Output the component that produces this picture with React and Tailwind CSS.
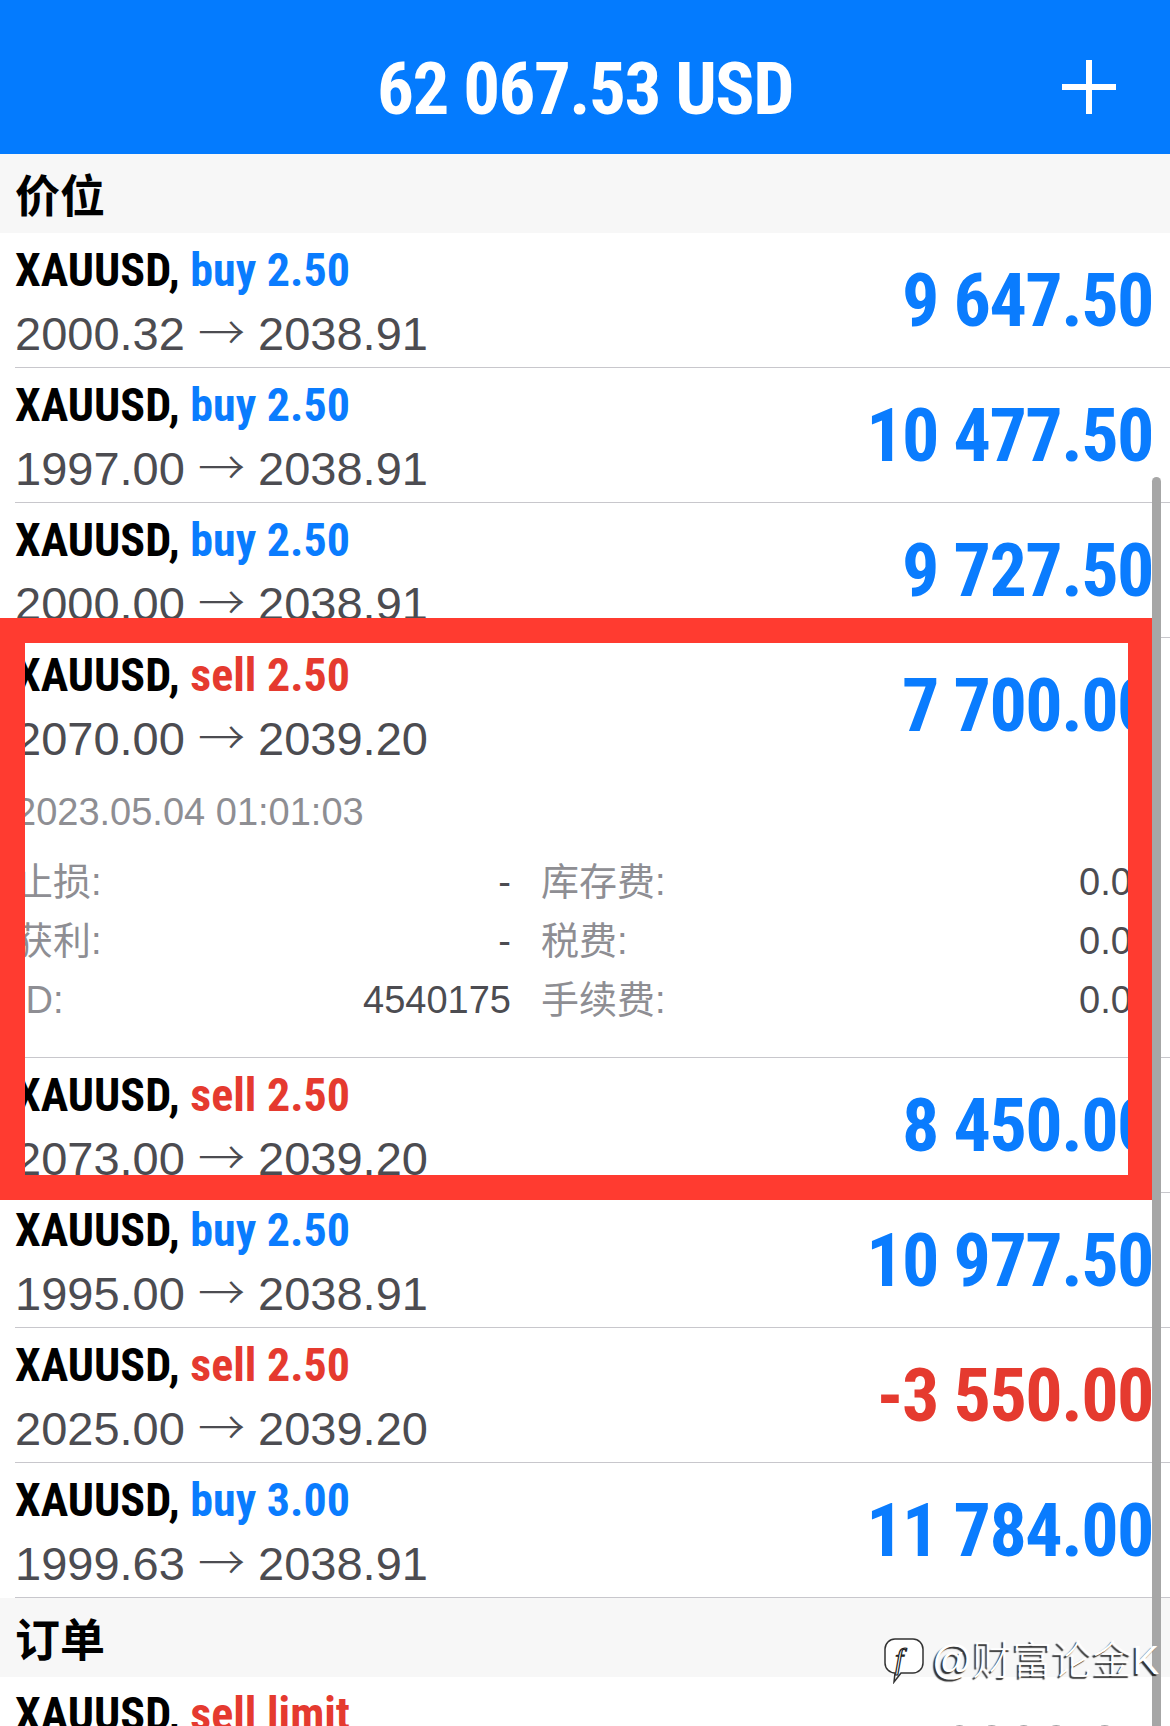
import React from "react";

const POSITIONS = [
  { side: "buy", lots: "2.50", open: "2000.32", price: "2038.91", profit: "9 647.50" },
  { side: "buy", lots: "2.50", open: "1997.00", price: "2038.91", profit: "10 477.50" },
  { side: "buy", lots: "2.50", open: "2000.00", price: "2038.91", profit: "9 727.50" },
  { side: "sell", lots: "2.50", open: "2070.00", price: "2039.20", profit: "7 700.00", open_details: true },
  { side: "sell", lots: "2.50", open: "2073.00", price: "2039.20", profit: "8 450.00" },
  { side: "buy", lots: "2.50", open: "1995.00", price: "2038.91", profit: "10 977.50" },
  { side: "sell", lots: "2.50", open: "2025.00", price: "2039.20", profit: "-3 550.00" },
  { side: "buy", lots: "3.00", open: "1999.63", price: "2038.91", profit: "11 784.00" },
];

const DETAILS = [
  ["止损:", "-", "库存费:", "0.00"],
  ["获利:", "-", "税费:", "0.00"],
  ["ID:", "4540175", "手续费:", "0.00"],
];

function PlusIcon() {
  return (
    <svg width="54" height="54" viewBox="0 0 54 54" fill="none">
      <path d="M27 0v54M0 27h54" stroke="white" strokeWidth="6" />
    </svg>
  );
}

function SectionHeader({ title }) {
  return (
    <div className="flex h-[79px] items-center bg-[#f7f7f7] pl-[15px] font-['Noto_Sans_CJK_SC',sans-serif] text-[45px] font-bold leading-none text-black">
      {title}
    </div>
  );
}

function PriceLine({ from, to }) {
  return (
    <div className="whitespace-nowrap font-['Liberation_Sans',sans-serif] text-[47px] leading-[64px] text-[#4c4c51]">
      {from}{" "}
      <span className="font-['Noto_Sans_CJK_SC',sans-serif] font-light leading-none">→</span>{" "}
      {to}
    </div>
  );
}

function RowTop({ p }) {
  const sideColor = p.side === "buy" ? "text-[#0a7cfe]" : "text-[#e53a2f]";
  const profitColor = p.profit.startsWith("-") ? "text-[#e53a2f]" : "text-[#0a7cfe]";
  return (
    <div className="flex h-[134px] justify-between pr-[17px]">
      <div className="pt-[5px]">
        <div className="whitespace-nowrap font-['Liberation_Sans_Narrow','Roboto_Condensed','DejaVu_Sans_Condensed',sans-serif] text-[46px] font-bold leading-[64px] text-black">
          XAUUSD, <span className={sideColor}>{p.side} {p.lots}</span>
        </div>
        <PriceLine from={p.open} to={p.price} />
      </div>
      <div
        className={`self-center whitespace-nowrap pt-[2px] font-['Liberation_Sans_Narrow','Roboto_Condensed','DejaVu_Sans_Condensed',sans-serif] text-[74px] font-bold leading-none tracking-[-1.5px] ${profitColor}`}
      >
        {p.profit}
      </div>
    </div>
  );
}

function Details() {
  return (
    <div className="h-[285px] pr-[17px] pt-[16px] font-['Liberation_Sans','Noto_Sans_CJK_SC',sans-serif] text-[38px]">
      <div className="leading-[48px] text-[#8e8e93]">2023.05.04 01:01:03</div>
      <div className="mt-[17px] grid grid-cols-[496px_1fr] gap-x-[30px]">
        {DETAILS.map(([l1, v1, l2, v2]) => (
          <React.Fragment key={l1}>
            <div className="flex h-[59px] items-center justify-between leading-[59px]">
              <span className="text-[#8e8e93]">{l1}</span>
              <span className="text-[#4c4c51]">{v1}</span>
            </div>
            <div className="flex h-[59px] items-center justify-between leading-[59px]">
              <span className="text-[#8e8e93]">{l2}</span>
              <span className="text-[#4c4c51]">{v2}</span>
            </div>
          </React.Fragment>
        ))}
      </div>
    </div>
  );
}

function PositionRow({ p }) {
  return (
    <div className="pl-[15px]">
      <div className="border-b border-[#c8c7cc]">
        <RowTop p={p} />
        {p.open_details && <Details />}
      </div>
    </div>
  );
}

function Watermark() {
  return (
    <div className="absolute left-[882px] top-[1636px] flex items-center gap-[6px]">
      <svg width="44" height="48" viewBox="0 0 44 48" fill="none">
        <path
          d="M13 3h18a10 10 0 0 1 10 10v14a10 10 0 0 1-10 10H19l-7 9 1-9a10 10 0 0 1-10-10V13A10 10 0 0 1 13 3z"
          fill="white"
          fillOpacity="0.9"
          stroke="#333"
          strokeWidth="1.5"
        />
        <text x="13" y="33" fill="white" stroke="#222" strokeWidth="1.2" fontSize="30" fontStyle="italic" fontFamily="Liberation Serif, serif">
          f
        </text>
      </svg>
      <span className="font-['Liberation_Sans','Noto_Sans_CJK_SC',sans-serif] text-[40px] font-light leading-none text-white [text-shadow:-2px_2px_1px_rgba(0,0,0,0.8)]">
        @财富论金K
      </span>
    </div>
  );
}

export default function App() {
  return (
    <div className="relative h-[1726px] w-full overflow-hidden bg-white">
      <header className="grid h-[154px] grid-cols-[1fr_auto_1fr] bg-[#047bfe]">
        <div />
        <div className="whitespace-nowrap pt-[53px] font-['Liberation_Sans_Narrow','Roboto_Condensed','DejaVu_Sans_Condensed',sans-serif] text-[73px] font-bold leading-none tracking-[-1.5px] text-white">
          62 067.53 USD
        </div>
        <div className="justify-self-end pr-[54px] pt-[60px]">
          <PlusIcon />
        </div>
      </header>

      <SectionHeader title="价位" />
      {POSITIONS.map((p, i) => (
        <PositionRow key={i} p={p} />
      ))}

      <SectionHeader title="订单" />
      <div className="pl-[15px]">
        <div className="flex h-[134px] justify-between pr-[17px]">
          <div className="whitespace-nowrap pt-[5px] font-['Liberation_Sans_Narrow','Roboto_Condensed','DejaVu_Sans_Condensed',sans-serif] text-[46px] font-bold leading-[64px] text-black">
            XAUUSD, <span className="text-[#e53a2f]">sell limit</span>
          </div>
          <div className="self-center pt-[4px] font-['Liberation_Sans',sans-serif] text-[58px] leading-none text-[#4c4c51]">
            2090.01
          </div>
        </div>
      </div>

      {/* annotation box drawn over the screenshot */}
      <div className="absolute left-0 top-[618px] h-[582px] w-[1153px] border-[25px] border-[#ff3b30]" />
      {/* scroll indicator */}
      <div className="absolute left-[1152px] top-[477px] h-[1300px] w-[9px] rounded-full bg-[#a6a6a6]" />
      <Watermark />
    </div>
  );
}
